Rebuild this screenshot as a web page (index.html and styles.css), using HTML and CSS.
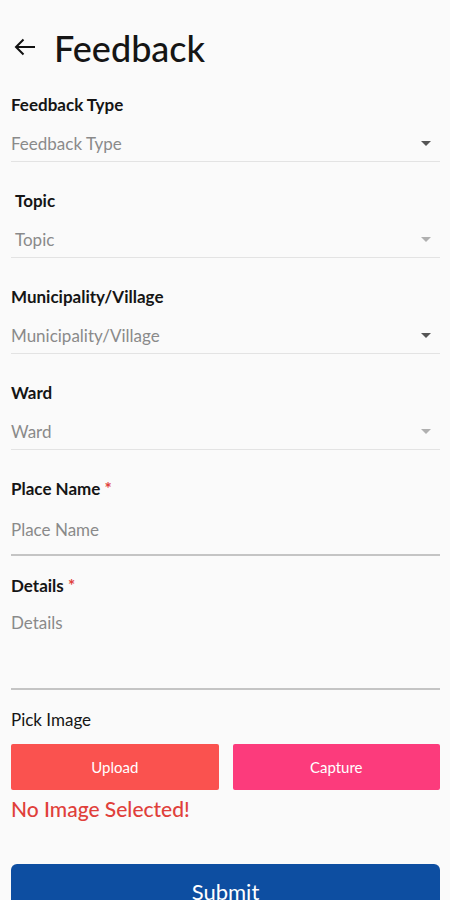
FILE: index.html
```html
<!DOCTYPE html>
<html lang="en">
<head>
  <meta charset="UTF-8" />
  <meta name="viewport" content="width=device-width, initial-scale=1" />
  <title>Feedback</title>
  <link rel="stylesheet" href="styles.css">
</head>
<body>
  <header class="top-bar">
    <button class="btn-back" aria-label="Back">
      <svg width="22" height="18" viewBox="0 0 22 18">
        <path d="M21 9H2M9.5 1.5L2 9l7.5 7.5" fill="none" stroke="#111" stroke-width="2" />
      </svg>
    </button>
    <h1>Feedback</h1>
  </header>

  <form class="feedback-form">
    <!-- dropdowns -->
    <div class="field">
      <label>Feedback Type</label>
      <div class="select">
        <span>Feedback Type</span>
        <span class="caret"></span>
      </div>
    </div>

    <div class="field field-indent">
      <label>Topic</label>
      <div class="select disabled">
        <span>Topic</span>
        <span class="caret"></span>
      </div>
    </div>

    <div class="field">
      <label>Municipality/Village</label>
      <div class="select">
        <span>Municipality/Village</span>
        <span class="caret"></span>
      </div>
    </div>

    <div class="field">
      <label>Ward</label>
      <div class="select disabled">
        <span>Ward</span>
        <span class="caret"></span>
      </div>
    </div>

    <!-- campos de texto -->
    <div class="field text-field">
      <label>Place Name <span class="req">*</span></label>
      <div class="input">Place Name</div>
    </div>

    <div class="field text-field">
      <label>Details <span class="req">*</span></label>
      <div class="input textarea">Details</div>
    </div>

    <div class="pick-image">
      <label>Pick Image</label>
      <div class="pick-buttons">
        <button type="button" class="btn-upload">Upload</button>
        <button type="button" class="btn-capture">Capture</button>
      </div>
      <p class="no-image">No Image Selected!</p>
    </div>

    <button type="button" class="btn-submit">Submit</button>
  </form>
</body>
</html>
```

FILE: styles.css
```css
body {
    font-family: Lato, 'Noto Sans', sans-serif;
    background: #fafafa;
    color: #111;
    margin: 0;
    padding: 0 10px 0 11px;
}

.top-bar {
    display: flex;
    align-items: flex-start;
    height: 94px;
}

.btn-back {
    background: none;
    border: none;
    padding: 0;
    margin: 38px 0 0 3px;
    width: 22px;
    height: 18px;
    cursor: pointer;
}

.top-bar h1 {
    font-size: 36px;
    font-weight: 500;
    margin: 26px 0 0 18px;
    line-height: 44px;
    color: #151515;
}

.field {
    margin-bottom: 28px;
}

.field label,
.pick-image label {
    display: block;
    font-size: 17px;
    line-height: 22px;
    font-weight: 700;
    color: #151515;
}

.req {
    color: #e0403a;
}

.field-indent label,
.field-indent .select span:first-child {
    padding-left: 4px;
}

.select {
    display: flex;
    align-items: center;
    justify-content: space-between;
    margin-top: 10px;
    height: 35px;
    border-bottom: 1px solid #e3e3e3;
    font-size: 17px;
    color: #8a8a8a;
}

.caret {
    width: 0;
    height: 0;
    border-left: 5px solid transparent;
    border-right: 5px solid transparent;
    border-top: 5px solid #555;
    margin-right: 9px;
}

.select.disabled .caret {
    border-top-color: #b0b0b0;
}

.text-field {
    margin-bottom: 19px;
}

.input {
    margin-top: 11px;
    padding: 8px 0 13px;
    line-height: 22px;
    font-size: 17px;
    color: #8a8a8a;
    border-bottom: 2px solid #c4c4c4;
}

.input.textarea {
    margin-top: 7px;
    height: 76px;
    padding-bottom: 0;
}

.pick-image {
    margin-top: 3px;
}

.pick-image label {
    font-weight: 400;
}

.pick-buttons {
    display: flex;
    gap: 14px;
    margin-top: 13px;
}

.pick-buttons button {
    flex: 1;
    height: 46px;
    border: none;
    border-radius: 2px;
    color: #fff;
    font-family: inherit;
    font-size: 15px;
    cursor: pointer;
}

.btn-upload {
    background: #fa524f;
}

.btn-capture {
    background: #fc3b7c;
}

.no-image {
    margin: 7px 0 0;
    font-size: 21px;
    line-height: 24px;
    font-weight: 500;
    color: #e0403a;
}

.btn-submit {
    display: block;
    width: 100%;
    height: 54px;
    margin-top: 43px;
    border: none;
    border-radius: 6px;
    background: #0d4ea1;
    color: #fff;
    font-family: inherit;
    font-size: 22px;
    cursor: pointer;
}
```
